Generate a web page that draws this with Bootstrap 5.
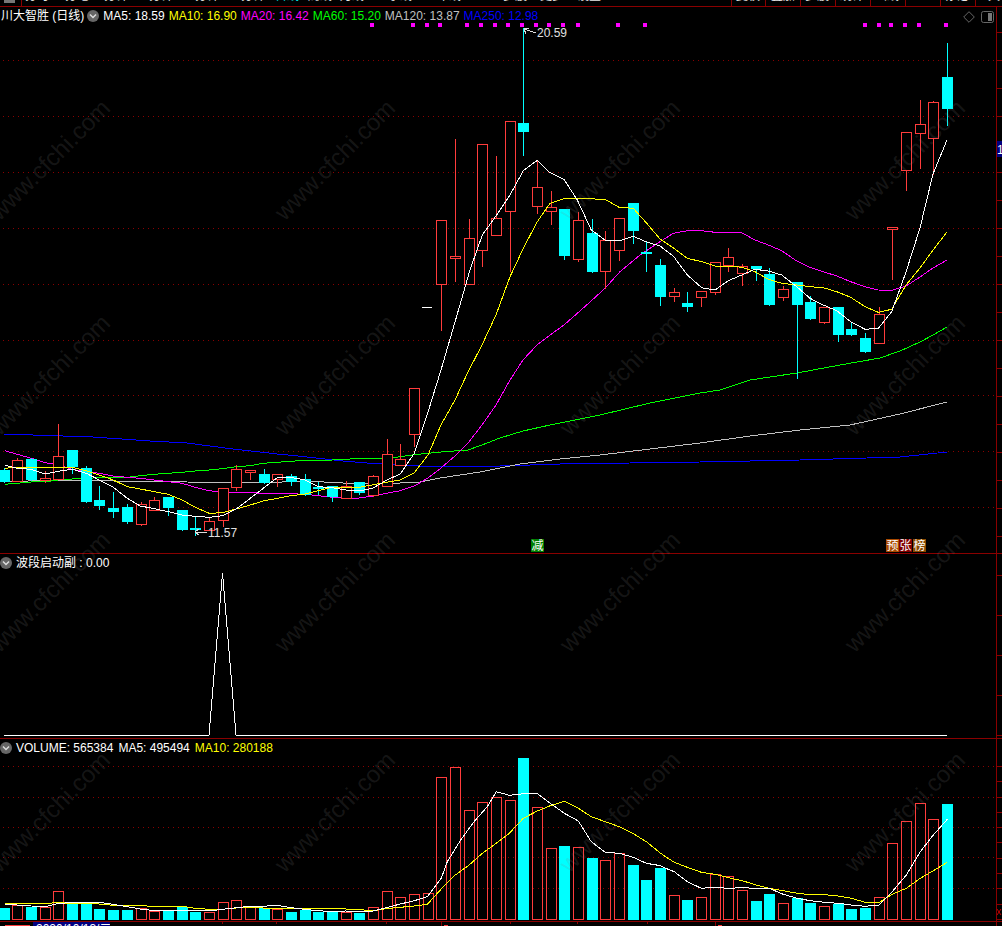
<!doctype html>
<html lang="zh">
<head>
<meta charset="utf-8">
<title>川大智胜 (日线)</title>
<link rel="stylesheet" href="https://cdn.jsdelivr.net/npm/bootstrap@5.3.0/dist/css/bootstrap.min.css">
<style>
html,body{margin:0;height:100%;background:#000;overflow:hidden}
.screen{width:1002px;height:926px;background:#000;color:#fff;font:12px/14px "Liberation Sans","Noto Sans CJK SC",sans-serif;overflow:hidden}
.topmenu{height:7px;border-bottom:1px solid #8a0000;overflow:hidden;color:#e8e8e8;flex:none}
.topmenu span{display:block;text-align:center;margin-top:-11px;flex:none;white-space:nowrap;width:30px}
.topmenu .rule{width:1px;height:6px;margin-top:0;background:#8a0000}
.topmenu .on{color:#0ff}
.gbox{display:block;width:11px;height:3px;background:#777;margin:0 6px 0 4px;flex:none}
.pane{border-bottom:1px solid #8a0000;flex:none}
.pane-main{height:547px}.pane-sub{height:185px}.pane-vol{height:183px}
.pane svg,.footer svg{display:block}
.legend{position:absolute;left:0;top:2px;white-space:nowrap;height:14px}
.legend-main{left:1px}
.chev{width:12px;height:12px;flex:none}
.chev-main{margin:0 4px 0 3px}
.ma1{color:#fff}.ma2{color:#ff0}.ma3{color:#f0f}.ma4{color:#0f0}.ma5{color:#c0c0c0}.ma6{color:#00f}
.gapm{column-gap:4px}
.gapv{column-gap:5px}
.tools{position:absolute;right:8px;top:4px;column-gap:6px}
.wm-layer{position:absolute;inset:0;pointer-events:none;overflow:hidden}
.wm{position:absolute;font:24px/30px "Liberation Sans",sans-serif;color:rgba(128,128,128,.18);transform:translate(-50%,-50%) rotate(-45deg);white-space:nowrap}
.footer{height:4px;flex:none}
.datebox{width:77px;height:5px;background:#000080;color:#fff;margin-left:33px;overflow:hidden;padding-left:3px;white-space:nowrap}
.foot-ticks{position:absolute;left:0;top:0}
</style>
</head>
<body>
<div class="screen position-relative d-flex flex-column">
  <div class="topmenu d-flex" id="menu"></div>

  <div class="pane pane-main position-relative">
    <svg id="main" width="1002" height="546" viewBox="0 7 1002 546"></svg>
    <div class="legend legend-main d-flex align-items-center">
      <span>川大智胜 (日线)</span>
      <svg class="chev chev-main" viewBox="0 0 12 12"><circle cx="6" cy="6" r="6" fill="#666"/><path d="M3 4.500 6 7.500 9 4.500" fill="none" stroke="#ddd" stroke-width="1.5"/></svg>
      <span class="d-flex gapm">
        <span class="ma1">MA5: 18.59</span>
        <span class="ma2">MA10: 16.90</span>
        <span class="ma3">MA20: 16.42</span>
        <span class="ma4">MA60: 15.20</span>
        <span class="ma5">MA120: 13.87</span>
        <span class="ma6">MA250: 12.98</span>
      </span>
    </div>
    <div class="tools d-flex align-items-center">
      <svg width="12" height="12" viewBox="0 0 12 12"><path d="M6 .7 11.300 6 6 11.300 .7 6Z" fill="none" stroke="#666"/></svg>
      <svg width="13" height="12" viewBox="0 0 13 12"><rect x=".5" y=".5" width="12" height="11" rx="2" fill="none" stroke="#666"/><rect x="7" y="2" width="4" height="8" fill="#777"/></svg>
    </div>
  </div>

  <div class="pane pane-sub position-relative">
    <svg id="sub" width="1002" height="184" viewBox="0 554 1002 184"></svg>
    <div class="legend d-flex align-items-center">
      <svg class="chev me-1" viewBox="0 0 12 12"><circle cx="6" cy="6" r="6" fill="#666"/><path d="M3 4.500 6 7.500 9 4.500" fill="none" stroke="#ddd" stroke-width="1.5"/></svg>
      <span>波段启动副 : 0.00</span>
    </div>
  </div>

  <div class="pane pane-vol position-relative">
    <svg id="vol" width="1002" height="182" viewBox="0 739 1002 182"></svg>
    <div class="legend d-flex align-items-center">
      <svg class="chev me-1" viewBox="0 0 12 12"><circle cx="6" cy="6" r="6" fill="#666"/><path d="M3 4.500 6 7.500 9 4.500" fill="none" stroke="#ddd" stroke-width="1.5"/></svg>
      <span class="d-flex gapv">
        <span class="ma1">VOLUME: 565384</span>
        <span class="ma1">MA5: 495494</span>
        <span class="ma2">MA10: 280188</span>
      </span>
    </div>
  </div>

  <div class="footer position-relative">
    <div class="datebox">2020/10/13/二</div>
    <svg class="foot-ticks" id="foot" width="1002" height="5" viewBox="0 922 1002 5"></svg>
  </div>

  <div class="wm-layer" id="wm"></div>
</div>

<script src="https://cdn.jsdelivr.net/npm/bootstrap@5.3.0/dist/js/bootstrap.bundle.min.js"></script>
<script>
var RED='#ff3c3c',CY='#00ffff',DK='#8a0000';
function X(i){return Math.floor(4.3+13.67*i)}
function zp(x0,y0,a){var o=[];for(var i=0;i<a.length;i+=2)o.push([x0+a[i]/3,y0+a[i+1]/3]);return o}
function poly(pts,c){return '<polyline fill="none" stroke="'+c+'" stroke-width="1" shape-rendering="crispEdges" points="'+pts.map(function(p){return p[0].toFixed(1)+','+p[1].toFixed(1)}).join(' ')+'"/>'}
function px(x,y,w,h,c){return '<rect x="'+x+'" y="'+y+'" width="'+w+'" height="'+h+'" fill="'+c+'" shape-rendering="crispEdges"/>'}
function dots(y,x2){return '<line x1="3" x2="'+x2+'" y1="'+(y+.5)+'" y2="'+(y+.5)+'" stroke="'+DK+'" stroke-dasharray="1 4" shape-rendering="crispEdges"/>'}
function ticks(ys){var s='';ys.forEach(function(y){s+=px(996,y,6,1,DK)});return s}
function axis(y1,y2){return px(996,y1,1,y2-y1,DK)}

/* top menu: [centre x, label, kind]; null label = vertical rule */
(function(){
 var items=[[21],[37,'分时'],[77,'分笔'],[116,'分钟'],[161,'分钟'],[207,'分钟'],[253,'分钟'],[287,'日线','on'],[320,'周线'],[352,'月线'],[400,'季线'],[449,'年线'],[515,'多股'],[552,'更多'],[589,'设置'],
  [731],[748,'复权'],[765],[783,'叠加'],[800],[817,'多股'],[835],[852,'统计'],[870],[887,'画线'],[905],[940],[956,'标记'],[975],[988,'工具']];
 var h='<i class="gbox"></i>',pos=21;
 items.forEach(function(t){
   if(t.length==1){h+='<span class="rule" style="margin-left:'+(t[0]-pos)+'px"></span>';pos=t[0]+1}
   else{h+='<span class="'+(t[2]||'')+'" style="margin-left:'+(t[0]-15-pos)+'px">'+t[1]+'</span>';pos=t[0]+15}
 });
 document.getElementById('menu').innerHTML=h;
})();

/* candles: colour, body top, body bottom, high, low */
var C=[
['c',470,481,468,482],['r',460,481,458,481],['c',459,479,458,480],['r',478,480,471,482],['r',456,479,424,479],
['c',450,466,450,473],['c',468,501,466,502],['c',500,505,486,509],['c',508,511,492,517],['c',507,521,504,523],
['r',504,524,502,525],['r',500,510,497,510],['c',497,507,497,515],['c',510,529,510,530],['c',528,529,517,535],
['r',521,530,517,530],['r',488,520,488,526],['r',469,487,465,490],['r',470,472,470,479],['c',474,482,469,483],
['r',474,479,474,486],['c',476,481,474,485],['c',479,494,474,495],['c',487,488,482,494],['c',486,496,486,501],
['r',486,498,481,498],['c',482,492,482,494],['r',476,495,475,496],['r',454,486,439,486],['r',459,465,444,465],
['r',388,434,388,446],null,['r',220,284,220,330],['r',256,258,139,281],['r',238,284,219,284],
['r',144,250,144,266],['r',218,235,156,235],['r',121,211,121,271],['c',123,131,28,155],['r',187,206,161,213],
['r',207,211,191,224],['c',209,255,209,259],['r',220,259,212,261],['c',233,271,219,272],['r',240,271,231,288],
['r',218,250,218,260],['c',203,230,203,243],['c',252,253,242,271],['c',265,296,259,305],['r',292,296,288,301],
['c',303,306,292,311],['r',291,297,291,306],['r',262,292,262,294],['r',257,265,248,271],['r',266,273,264,285],
['c',266,268,266,280],['c',274,304,268,305],['r',289,297,286,300],['c',282,304,282,378],['c',302,318,296,319],
['r',307,322,307,323],['c',307,334,307,341],['c',329,334,323,335],['c',338,351,333,352],['r',314,343,307,343],
['r',227,229,227,279],['r',132,170,132,190],['r',124,133,100,168],['r',102,138,101,174],['c',77,108,43,125]
];
var V=[908,905,907,907,891,903,903,909,910,910,908,911,911,907,912,912,902,900,907,908,909,912,910,912,912,912,913,907,891,897,894,893,777,767,810,802,797,800,758,807,848,846,847,858,860,853,865,880,868,895,900,897,874,876,890,901,894,903,898,903,906,904,909,908,897,843,821,803,819,804];
var VC='crcrrcccccrrcccrrrrcrcccc'+'rcrrrrrrrrrrrcrrcrcrrcccr'+'crrrrccrccrcccrrrrrc';

/* moving averages */
var m5=zp(0,400,[14,196,52,205,94,208,136,222,175,214,217,208,259,220,298,240,340,262,382,295,421,318,463,326,505,335,546,345,586,349,628,352,667,347,709,327,751,295]).concat(
 zp(260,400,[10,265,52,233,92,232,135,240,175,260,217,263,258,270,298,273,340,264,380,240,421,222,463,160]),
 [[428,412],[441,370],[455,322]],
 zp(420,120,[150,450,187,345,230,285,270,225,310,152,352,121,390,158,432,178,472,240,514,330,555,360,597,363,640,349,680,366]),
 zp(640,190,[60,168,100,198,142,255,185,293,225,300,265,272,305,255,345,238,385,243,425,255,470,290,510,325,550,345,590,362,632,395,675,418,715,415,755,365]),
 [[906,272],[920,228],[933,174],[947,140]]);
var m10=zp(0,400,[14,205,52,202,94,202,136,202,175,202,217,202,259,212,298,225,340,240,382,260,421,267,463,275,505,283,546,300,586,322,628,340,667,338,709,327,751,315]).concat(
 zp(260,400,[10,303,52,295,92,287,135,282,175,272,217,262,258,263,298,262,340,254,380,247,421,240,463,218]),
 [[428,455],[441,425],[455,400],[468,372],[482,345],[496,315]],
 zp(420,120,[270,470,310,385,352,305,390,250,432,236,495,236,555,238,597,262,640,265,680,310,720,357]),
 zp(640,190,[102,175,142,205,185,215,225,228,265,228,305,232,345,245,385,268,425,280,470,285,510,290,550,293,590,305,632,322,675,350,715,367,755,358]),
 [[906,285],[920,268],[933,250],[947,232]]);
var m20=zp(0,400,[14,152,52,163,94,175,136,188,175,195,217,208,259,215,298,220,340,228,382,232,421,235,463,240,505,245,546,250,586,262,628,272,667,277,709,278,751,278]).concat(
 zp(260,400,[10,280,52,280,92,281,135,283,175,287,217,292,258,295,298,294,340,288,380,280,421,272,463,258]),
 [[428,478],[441,468],[455,456],[468,443],[482,425],[496,405],[510,380],[523,360],[537,345],[550,335],[564,325]],
 zp(420,120,[500,555,555,505,600,455,660,405,720,365]),
 zp(640,190,[100,130,142,122,185,122,225,127,305,128,345,150,385,165,425,182,470,213,510,232,550,245,590,258,632,275,675,290,715,300,755,301]),
 [[906,286],[920,277],[933,268],[947,260]]);
var m60=zp(0,400,[14,253,52,250,94,246,136,245,175,240,217,237,259,235,298,233,340,232,382,232,421,227,463,223,505,220,546,217,586,213,628,210,667,206,709,200,751,197]).concat(
 zp(260,400,[10,190,52,187,92,184,135,181,175,181,217,180,258,178,298,175,340,175,380,175,421,170,463,164]),
 [[441,452],[468,450],[482,445],[500,438],[523,431],[550,425],[600,415],[650,403],[700,393],[720,390],[750,380],[797,373],[840,365],[880,358],[900,351],[920,342],[933,335],[947,327]]);
var m120=[[4,482],[53,480],[113,481],[187,482],[260,483],[305,481],[343,483],[400,483],[420,482],[440,478],[480,472],[520,464],[560,459],[600,455],[650,449],[700,443],[750,436],[800,430],[850,425],[900,414],[947,402]];
var m250=[[4,434],[33,435],[93,437],[150,441],[187,443],[233,449],[260,452],[277,454],[298,456],[325,459],[343,461],[367,463],[390,464],[420,466],[500,466],[560,464],[700,462],[800,460],[900,457],[947,452]];

/* main pane */
(function(){
 var s='';
 [60,116,172,228,284,340,395,451,507].forEach(function(y){s+=dots(y,996)});
 var t=[];for(var y=32;y<553;y+=28)t.push(y);
 s+=ticks(t)+axis(7,553);
 s+=poly(m250,'#0000ff')+poly(m120,'#c0c0c0')+poly(m60,'#00ff00')+poly(m20,'#ff00ff');
 C.forEach(function(c,i){
   if(!c)return;var x=X(i),col=c[0]=='r'?RED:CY;
   s+=px(x,c[3],1,c[4]-c[3]+1,col);
   if(c[0]=='r'){
     s+=px(x-5,c[1],11,c[2]-c[1]+1,'#000');
     s+='<rect x="'+(x-4.5)+'" y="'+(c[1]+.5)+'" width="10" height="'+(c[2]-c[1])+'" fill="none" stroke="'+RED+'" shape-rendering="crispEdges"/>';
   } else s+=px(x-5,c[1],11,c[2]-c[1]+1,CY);
 });
 s+=px(422,307,10,1,'#fff');
 s+=poly(m10,'#ffff00')+poly(m5,'#ffffff');
 [372,413,427,440,467,481,495,508,522,536,549,563,578,618,645,865,879,891,905,919,946].forEach(function(x){s+=px(x-2,23,4,4,'#ff00ff')});
 /* high / low notes */
 s+='<path d="M524 29 536 33M524 29 529 28M524 29 526 34" fill="none" stroke="#ddd" shape-rendering="crispEdges"/>';
 s+='<text x="537" y="37" fill="#e0e0e0" font-size="12" font-family="Liberation Sans">20.59</text>';
 s+='<path d="M195 532H207M195 532 199 529M195 532 199 535" fill="none" stroke="#ddd" shape-rendering="crispEdges"/>';
 s+='<text x="208" y="537" fill="#e0e0e0" font-size="12" font-family="Liberation Sans">11.57</text>';
 /* signal marks */
 [[531,'减','#008000'],[886,'预','#a84a00'],[899,'张','#800000'],[913,'榜','#8a4a00']].forEach(function(m){
   s+=px(m[0],539,13,13,m[2]);
   s+='<text x="'+(m[0]+.5)+'" y="550" fill="#fff" font-size="12" font-family="Noto Sans CJK SC">'+m[1]+'</text>';
 });
 /* price tag on the axis */
 s+=px(997,141,5,16,'#000080');
 s+='<text x="997" y="154" fill="#fff" font-size="12" font-family="Liberation Sans">1</text>';
 document.getElementById('main').innerHTML=s;
})();

/* indicator pane */
(function(){
 var s=axis(554,738);
 s+=poly([[4,735],[209,735],[222.5,573],[236,735],[947,735]],'#ffffff');
 var t=[];for(var y=575;y<738;y+=40)t.push(y);
 s+=ticks(t);
 document.getElementById('sub').innerHTML=s;
})();

/* volume pane */
(function(){
 var s='';
 [766,797,827,857,888].forEach(function(y){s+=dots(y,996)});
 var t=[];for(var y=766;y<920;y+=15.3)t.push(Math.round(y));
 s+=ticks(t)+axis(739,921);
 V.forEach(function(v,i){
   var x=X(i);
   if(VC[i]=='c')s+=px(x-5,v,11,920-v,CY);
   else s+='<rect x="'+(x-4.5)+'" y="'+(v+.5)+'" width="10" height="'+(919-v)+'" fill="none" stroke="'+RED+'" shape-rendering="crispEdges"/>';
 });
 var a=zp(0,735,[14,508,52,510,94,513,136,515,175,505,217,503,259,503,298,502,340,508,382,515,421,522,463,527,505,527,546,525,586,527,628,528,667,523,709,518,751,514,790,514,832,511,874,518,913,523,955,527]).concat(
  zp(334,735,[-3,530,35,528,76,529,118,528,157,518,199,507,241,497,280,485,322,430,340,380,380,315,420,260,460,215,487,170,526,181,568,176,610,176,649,205,691,235,733,258,772,320,814,352,856,355,898,367,937,385,980,392]),
  zp(668,735,[0,403,19,410,58,440,100,460,142,457,181,460,223,458,265,460,304,460,346,478,388,490,427,497,469,502,511,505,550,510,592,514,634,510,673,470,715,420,757,350,796,300,838,253]));
 var b=zp(0,735,[14,505,136,505,175,503,217,505,298,507,340,511,382,513,421,512,463,514,505,514,546,514,586,520,628,523,667,523,709,519,751,518,790,519,832,519,874,520,913,520,955,521]).concat(
  zp(334,735,[-3,520,35,522,76,524,118,527,157,521,199,517,241,513,280,508,322,462,364,420,403,392,445,355,487,325,526,295,568,250,610,228,649,212,691,199,733,220,772,245,814,260,856,275,898,296,937,320,980,355]),
  zp(668,735,[0,370,19,382,58,397,100,412,142,418,181,428,223,437,265,450,304,460,346,467,388,475,427,479,469,479,511,483,550,490,592,502,634,502,673,478,715,460,757,430,796,407,838,382]));
 s+=poly(b,'#ffff00')+poly(a,'#ffffff');
 s+='<path d="M997 909 1001 915M1001 909 997 915" stroke="#c00000" fill="none"/>';
 document.getElementById('vol').innerHTML=s;
})();

/* foot ticks */
(function(){
 var s='';
 [222,276,386,510,577,647].forEach(function(x){s+=px(x,922,1,2,DK)});
 [441,715].forEach(function(x){s+=px(x,922,1,5,DK);s+=px(x+3,925,4,1,RED)});
 s+=px(5,925,25,1,RED);
 s+=px(996,922,1,5,DK);
 document.getElementById('foot').innerHTML=s;
})();

/* watermark */
(function(){
 var h='',xs=[50,335,620,905],ys=[160,375,592,812];
 ys.forEach(function(y){xs.forEach(function(x){h+='<span class="wm" style="left:'+x+'px;top:'+y+'px">www.cfchi.com</span>'})});
 document.getElementById('wm').innerHTML=h;
})();
</script>
</body>
</html>
